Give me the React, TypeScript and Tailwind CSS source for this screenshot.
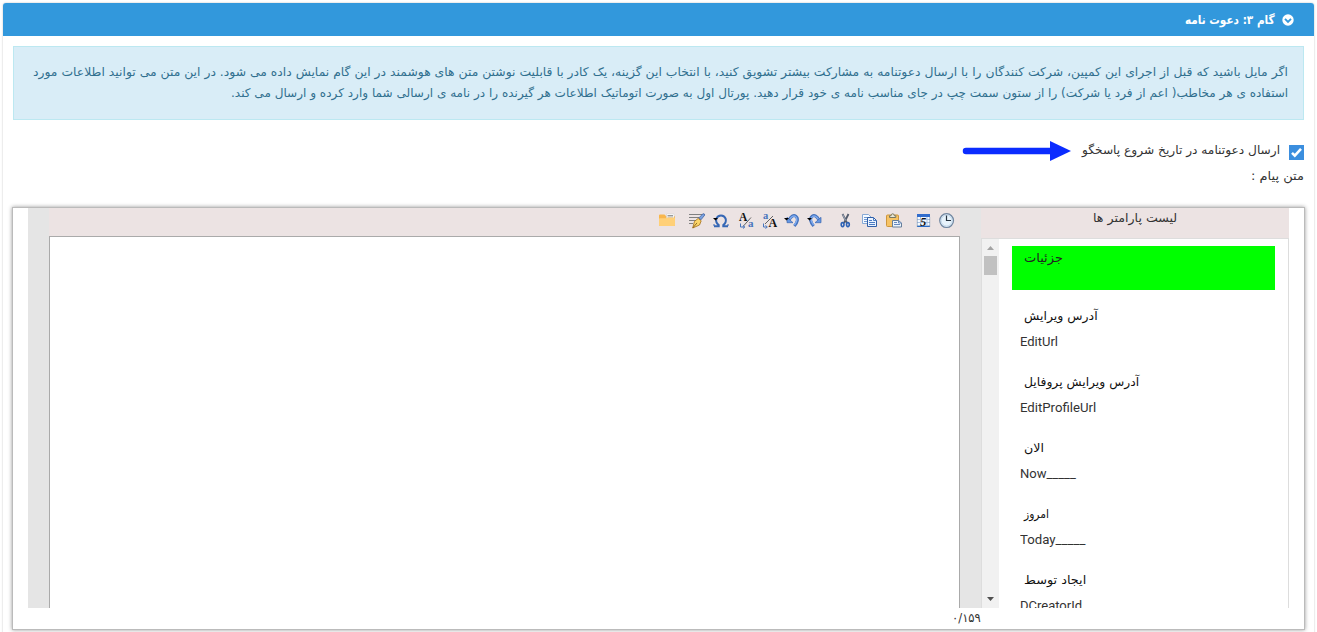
import { useLayoutEffect, useRef, useState } from 'react';
import type { ReactNode } from 'react';

/** Scales a single line of text horizontally so that it fills its column. */
function Fit({ children, className = '', origin = 'right', textDir = 'rtl' }: { children: ReactNode; className?: string; origin?: 'left' | 'right'; textDir?: 'ltr' | 'rtl' }) {
  const box = useRef<HTMLDivElement>(null);
  const text = useRef<HTMLSpanElement>(null);
  const [scale, setScale] = useState(1);
  useLayoutEffect(() => {
    if (box.current && text.current) setScale(box.current.clientWidth / text.current.offsetWidth);
  }, []);
  return (
    <div ref={box} dir={origin === 'right' ? 'rtl' : 'ltr'} className={`shrink-0 whitespace-nowrap ${className}`}>
      <span ref={text} dir={textDir} className="inline-block" style={{ transform: `scaleX(${scale})`, transformOrigin: origin }}>
        {children}
      </span>
    </div>
  );
}

function Icon({ children, gap = '' }: { children: ReactNode; gap?: string }) {
  return (
    <svg viewBox="0 0 16 16" className={`h-4 w-4 shrink-0 overflow-visible ${gap}`}>
      {children}
    </svg>
  );
}

const Folder = () => (
  <Icon>
    <path d="M0 2.5q0-1 1-1h4.5L7 3h8q1 0 1 1v8q0 1-1 1H1q-1 0-1-1z" fill="#f8b64c" />
    <path d="M7.5 1h7.5v5H7.5z" fill="#fff" stroke="#ccc" strokeWidth=".5" />
    <path d="M8.5 2.5H14M8.5 4H14" stroke="#999" />
    <path d="M0 6q0-.7.8-.7H7L8.5 4.5H15q1 0 1 1V12q0 1-1 1H1q-1 0-1-1z" fill="#ffd078" />
  </Icon>
);
const Pen = () => (
  <Icon gap="ml-[14px]">
    <path d="M0 1.5h14M0 4.5h10M0 7.5h7M0 10.5h4" stroke="#808080" />
    <path d="M9.8 5 13.8.8q1.8-.5 2 1.2L12 6.8z" fill="#7aa2e0" stroke="#36599c" strokeWidth=".7" />
    <path d="m9.2 5.4 3 2.4-1.7 4.2-6.8 3 1.8-6.6z" fill="#fbd66a" stroke="#a56d14" strokeWidth=".8" />
    <path d="m4 14.7 4-4.8" stroke="#76500f" strokeWidth=".8" />
  </Icon>
);
const Omega = () => (
  <Icon gap="ml-2">
    <path d="M1 13.2h4.7V12C3.3 10.2 2.6 8 3.4 5.6 4.2 3.4 5.8 2.4 8 2.4s3.8 1 4.6 3.2c.8 2.4.1 4.6-2.3 6.4v1.2H15" fill="none" stroke="#3567b5" strokeWidth="2" />
    <path d="M1 11v2M15 11v2" stroke="#3567b5" />
    <path d="M0 5h5L2.5 7.5z" fill="#000" />
  </Icon>
);
const Lower = () => (
  <Icon gap="ml-[9px]">
    <text x="1" y="7.5" fontSize="11.5" fontWeight="bold" fontFamily="Liberation Serif" fill="#111">A</text>
    <text x="10" y="14" fontSize="11" fontWeight="bold" fontFamily="Liberation Serif" fill="#4775bd">a</text>
    <path d="m5 13.5 8-9" stroke="#555" strokeWidth=".9" />
    <path d="M2.5 10.5V14h4M5 12.5 6.8 14 5 15.5" fill="none" stroke="#4775bd" />
  </Icon>
);
const Upper = () => (
  <Icon gap="ml-2">
    <text x="1" y="5.5" fontSize="10.5" fontWeight="bold" fontFamily="Liberation Serif" fill="#4775bd">a</text>
    <text x="6.5" y="14" fontSize="12" fontWeight="bold" fontFamily="Liberation Serif" fill="#111">A</text>
    <path d="m3 11 8-8" stroke="#555" strokeWidth=".9" />
    <path d="M1.5 10.5V14h3M3.5 12.5 5.3 14l-1.8 1.5" fill="none" stroke="#4775bd" />
  </Icon>
);
const ArrowArt = () => (
  <>
    <path d="M5 7C7 3.2 9.6 1.6 11.8 3.2c2.8 2.2 1.9 6-1.5 9.8" fill="none" stroke="#4673bd" strokeWidth="3" />
    <path d="M5.5 6.5C7.5 3.3 9.7 2.2 11.5 3.5c2.2 1.9 1.5 5-1 8.5" fill="none" stroke="#80acf0" strokeWidth="1.4" />
    <path d="M3 4.3v5.4h6z" fill="#6598e4" stroke="#3d66ad" strokeWidth=".7" />
  </>
);
const Undo = () => (
  <Icon gap="ml-[6px]"><ArrowArt /><path d="M0 5h5L2.5 7.5z" /></Icon>
);
const Redo = () => (
  <Icon gap="ml-[7px]"><g transform="translate(17 0) scale(-1 1)"><ArrowArt /></g><path d="M0 5h5L2.5 7.5z" /></Icon>
);
const Cut = () => (
  <Icon gap="ml-[15px]">
    <path d="m4.5 1 4.5 9M10.5 1 6 10" stroke="#515b6c" strokeWidth="1.8" />
    <path d="m4.7 1.5 3 6" stroke="#b7c2d2" strokeWidth=".8" />
    <ellipse cx="4.6" cy="11.6" rx="1.4" ry="2" fill="none" stroke="#2d62b5" strokeWidth="1.6" />
    <ellipse cx="9.9" cy="11.6" rx="1.4" ry="2" fill="none" stroke="#2d62b5" strokeWidth="1.6" />
  </Icon>
);
const Copy = () => (
  <Icon gap="ml-2">
    <path d="M.5 1.5h6l3 3v6h-9z" fill="#f5faff" stroke="#87a9d5" />
    <path d="M2 4.5h4M2 6.5h4M2 8.5h3" stroke="#7099d3" />
    <path d="M5.5 4.5h6l3 3v6h-9z" fill="#eaf3ff" stroke="#315fa7" />
    <path d="M11.5 4.5v3h3M7 7.5h3M7 9.5h6M7 11.5h6" fill="none" stroke="#4b7cc3" />
  </Icon>
);
const Paste = () => (
  <Icon gap="ml-2">
    <rect x=".5" y="2" width="12" height="11.5" rx="1" fill="#f6c365" stroke="#ce963c" />
    <path d="M3.5 4.5V2.8H5q.2-2 1.7-2t1.7 2h1.4v1.7z" fill="#e9e9d8" stroke="#777762" />
    <path d="M6.5 7.5h6l3 2.5v4h-9z" fill="#edf4fc" stroke="#667e99" />
    <path d="M12.5 7.5V10h3M8 9.5h3M8 11.5h6" fill="none" stroke="#6789bd" />
  </Icon>
);
const Calendar = () => (
  <Icon gap="ml-[14px]">
    <path d="M1 1h13v13H1z" fill="#f6faff" />
    <path d="M1 6.5h13M1 9.5h13M1 12.5h13M4.5 4v10M11 4v10" stroke="#a9c0df" />
    <path d="M1 1h13v3H1z" fill="#326dcd" /><path d="M1 13.5h13" stroke="#286ac7" />
    <path d="M1.3 4v10M13.7 4v10" stroke="#728eaf" strokeWidth=".6" />
    <text x="4.3" y="13" fontSize="12" fontWeight="bold" fontStyle="italic" fontFamily="Liberation Serif" fill="#111">5</text>
  </Icon>
);
const Clock = () => (
  <Icon gap="ml-[7px]">
    <circle cx="7.6" cy="7.6" r="6.9" fill="#dceaf8" stroke="#71869f" strokeWidth="1.2" />
    <circle cx="7.6" cy="7.6" r="5.4" fill="#e8f3fc" stroke="#b6cde1" strokeWidth=".6" />
    <path d="M7.5 2.5v5H12" fill="none" stroke="#26323e" strokeWidth="1.2" />
  </Icon>
);

const params = [
  { label: 'آدرس ویرایش', value: 'EditUrl', width: 'w-[74px]', vWidth: 'w-[38px]' },
  { label: 'آدرس ویرایش پروفایل', value: 'EditProfileUrl', width: 'w-[115px]', vWidth: 'w-[76px]' },
  { label: 'الان', value: 'Now_____', width: 'w-[20px]', vWidth: 'w-[56px]' },
  { label: 'امروز', value: 'Today_____', width: 'w-[25px]', vWidth: 'w-[65px]' },
  { label: 'ایجاد توسط', value: 'DCreatorId', width: 'w-[62px]', vWidth: 'w-[62px]' },
];

function ParameterList() {
  return (
    <section dir="ltr" className="flex h-[400px] w-[308px] flex-col overflow-hidden">
      <div className="flex h-[30px] shrink-0 justify-center bg-[#ece3e3]">
        <Fit className="h-5 w-[84px] leading-[20px] text-[#333]">لیست پارامتر ها</Fit>
      </div>
      <div className="flex h-[370px] border border-b-0 border-[#ddd]">
        <div className="flex w-[17px] shrink-0 flex-col items-center bg-[#f1f1f1]">
          <svg viewBox="0 0 17 17" className="h-[17px] w-[17px] shrink-0"><path d="M5 11h7L8.5 7z" fill="#a3a3a3" /></svg>
          <div className="h-[19px] w-[13px] shrink-0 bg-[#c1c1c1]" />
          <svg viewBox="0 0 17 17" className="mt-auto h-[17px] w-[17px] shrink-0"><path d="M5 6h7L8.5 10z" fill="#505050" /></svg>
        </div>
        <div className="flex flex-1 flex-col overflow-hidden pl-[13px] pr-[13px] pt-[7px]">
          <div className="h-[44px] shrink-0 bg-[#00ff00] pl-3">
            <Fit origin="left" className="w-[39px] leading-[24px] text-[#222]">جزئیات</Fit>
          </div>
          <div className="flex flex-col pt-[13px]">
            {params.map((p) => (
              <div key={p.value} className="h-[66px] shrink-0 pl-2">
                <Fit origin="left" className={`ml-1 h-[26px] leading-[26px] text-[#111] ${p.width}`}>{p.label}</Fit>
                <Fit origin="left" textDir="ltr" className={`h-[26px] font-[Roboto,sans-serif] text-[13px] leading-[26px] text-[#333] ${p.vWidth}`}>{p.value}</Fit>
              </div>
            ))}
          </div>
        </div>
      </div>
    </section>
  );
}

function Editor() {
  return (
    <section dir="ltr" className="flex h-[400px] w-[953px] flex-col bg-[#e5e5e5] pl-[21px] pr-[21px]">
      <div className="flex h-[28px] shrink-0 items-center bg-[#ece3e3] pb-[2px] pl-[610px]">
        <Folder /><Pen /><Omega /><Lower /><Upper /><Undo /><Redo /><Cut /><Copy /><Paste /><Calendar /><Clock />
      </div>
      <div className="flex-1 border border-b-0 border-[#aaa] bg-white" />
    </section>
  );
}

export default function App() {
  return (
    <div dir="rtl" className="h-[632px] overflow-hidden bg-white px-[3px] pt-[3px] font-['DejaVu_Sans',sans-serif] text-[12px]">
      <main className="h-[640px] rounded-t-[3px] shadow-[0_0_2px_#bbb]">
        <header className="flex h-[33px] items-center rounded-t-[3px] bg-[#3298dc] pr-[20px] text-white">
          <svg viewBox="0 0 12 12" className="h-3 w-3 shrink-0">
            <circle cx="6" cy="6" r="5.7" fill="#fff" />
            <path d="m3 4.8 3 3 3-3" fill="none" stroke="#3298dc" strokeWidth="1.9" />
          </svg>
          <Fit className="mr-[7px] w-[90px] font-bold leading-[30px]">گام ۳: دعوت نامه</Fit>
        </header>
        <div className="px-[10px] pt-[10px]">
          <div className="h-[74px] border border-[#bce8f1] bg-[#d9edf7] pr-[15px] pt-[15px] text-[#31708f]">
            <Fit className="h-[21px] w-[1255px] leading-[21px]">اگر مایل باشید که قبل از اجرای این کمپین، شرکت کنندگان را با ارسال دعوتنامه به مشارکت بیشتر تشویق کنید، با انتخاب این گزینه، یک کادر با قابلیت نوشتن متن های هوشمند در این گام نمایش داده می شود. در این متن می توانید اطلاعات مورد</Fit>
            <Fit className="h-[21px] w-[1057px] leading-[21px]">استفاده ی هر مخاطب( اعم از فرد یا شرکت) را از ستون سمت چپ در جای مناسب نامه ی خود قرار دهید. پورتال اول به صورت اتوماتیک اطلاعات هر گیرنده را در نامه ی ارسالی شما وارد کرده و ارسال می کند.</Fit>
          </div>
          <div className="mt-[21px] flex h-[20px] items-start text-[#333]">
            <svg viewBox="0 0 15 15" className="mt-1 h-[15px] w-[15px] shrink-0">
              <path d="M0 0h15v15H0z" fill="#3b8ede" />
              <path d="m3 7.8 2.8 2.8L12 3.8" fill="none" stroke="#fff" strokeWidth="2.6" />
            </svg>
            <Fit className="mr-[9px] w-[198px] leading-[19px]">ارسال دعوتنامه در تاریخ شروع پاسخگو</Fit>
            <svg viewBox="0 0 109 20" className="mr-[11px] h-[20px] w-[109px] shrink-0">
              <path d="M4 10h88" stroke="#0b2cff" strokeWidth="6.5" strokeLinecap="round" />
              <path d="m88 0 21 10-21 10z" fill="#0b2cff" />
            </svg>
          </div>
          <Fit className="mt-[5px] h-[20px] w-[53px] leading-[20px] text-[#333]">متن پیام :</Fit>
          <div className="-mx-px mt-[21px] h-[423px] border border-[#bbb] bg-white pl-[15px] pr-[15px] shadow-[0_0_4px_#999]">
            <div className="flex">
              <ParameterList />
              <Editor />
            </div>
            <div className="flex h-[20px] pl-[924px]" dir="ltr">
              <Fit origin="left" className="w-[29px] leading-[20px] text-[#333]"><bdo dir="ltr">۰/۱۵۹</bdo></Fit>
            </div>
          </div>
        </div>
      </main>
    </div>
  );
}
